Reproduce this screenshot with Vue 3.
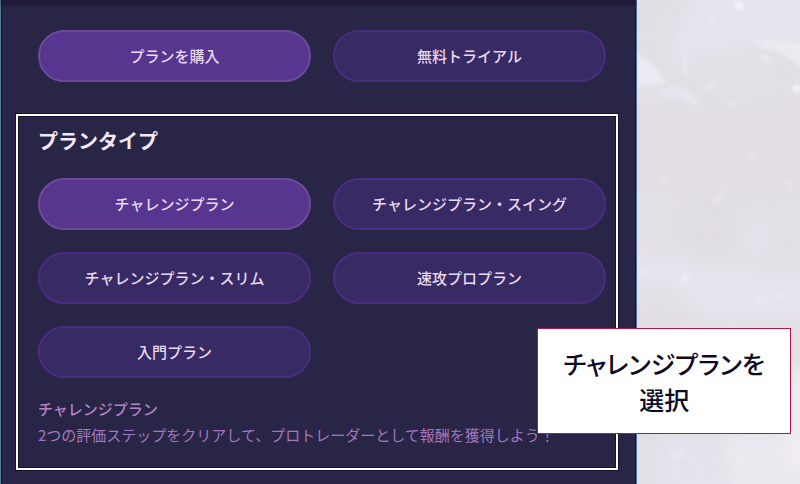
<script setup>
import { ref, computed } from 'vue'

const modes = ['プランを購入', '無料トライアル']
const plans = [
  'チャレンジプラン',
  'チャレンジプラン・スイング',
  'チャレンジプラン・スリム',
  '速攻プロプラン',
  '入門プラン',
]
const descriptions = {
  'チャレンジプラン': '2つの評価ステップをクリアして、プロトレーダーとして報酬を獲得しよう！',
}

const mode = ref(modes[0])
const plan = ref(plans[0])
const description = computed(() => descriptions[plan.value] ?? '')
</script>

<template>
  <div class="page">
    <main class="panel">
      <div class="strip"></div>
      <div class="options modes">
        <button
          v-for="m in modes"
          :key="m"
          type="button"
          class="pill"
          :class="{ active: m === mode }"
          :aria-pressed="m === mode"
          @click="mode = m"
        >{{ m }}</button>
      </div>

      <section class="frame">
        <h2 class="title">プランタイプ</h2>
        <div class="options">
          <button
            v-for="p in plans"
            :key="p"
            type="button"
            class="pill"
            :class="{ active: p === plan }"
            :aria-pressed="p === plan"
            @click="plan = p"
          >{{ p }}</button>
        </div>
        <div class="about">
          <h3 class="about-name">{{ plan }}</h3>
          <p class="about-text">{{ description }}</p>
        </div>
      </section>
    </main>

    <aside class="marble">
      <svg viewBox="0 0 163 484" preserveAspectRatio="xMidYMid slice" aria-hidden="true">
        <defs>
          <filter id="soft" x="-30%" y="-30%" width="160%" height="160%" color-interpolation-filters="sRGB">
            <feGaussianBlur stdDeviation="9" />
          </filter>
          <filter id="fine" x="-50%" y="-50%" width="200%" height="200%" color-interpolation-filters="sRGB">
            <feGaussianBlur stdDeviation="2" />
          </filter>
        </defs>
        <rect width="163" height="484" fill="#e2dfe5" />
        <g filter="url(#soft)">
          <path d="M62 -20H183V58L130 44 98 50 58 52 48 74 34 62 38 38Z" fill="#e6e4ee" />
          <path d="M-20 -20H60L34 34 30 52 -20 48Z" fill="#e0dfe4" />
          <path d="M60 60 100 52 134 62 150 90 100 104 60 92Z" fill="#e0e0e5" />
          <path d="M-20 118H183V180L90 190 -20 170Z" fill="#e1dde3" />
          <path d="M-20 250 50 262 100 268 183 282V318L126 314 92 324 60 312 40 290 -20 280Z" fill="#e7e4ee" />
          <path d="M104 226 136 218 128 262 112 256Z" fill="#e5e2ec" />
          <path d="M56 190 88 200 82 262 60 258Z" fill="#dfdce2" />
          <path d="M-20 320 60 330 50 430 -20 434Z" fill="#e1dee4" />
          <path d="M80 434H183V504H100Z" fill="#ede9f1" />
          <path d="M20 440 66 434 98 504H20Z" fill="#e4e2ec" />
          <path d="M150 370H183V470L150 460Z" fill="#f1edf3" />
        </g>
        <g filter="url(#fine)">
          <path d="M-4 50 16 65 30 82 -4 88Z" fill="#eeeaf3" />
          <path d="M116 38 167 44V70L144 52 126 48Z" fill="#eeeaf2" />
          <path d="M60 38 50 52 50 72 54 80 46 72 46 52Z" fill="#eae6ee" />
          <path d="M20 90 36 86 52 92 64 104 58 105 44 98 24 96Z" fill="#e8e5ef" />
          <path d="M124 54 136 60 132 64 122 58Z" fill="#ece8f2" />
          <path d="M20 182 32 172 28 180 22 184Z" fill="#ebe7ef" />
          <path d="M90 184 84 202 72 206 80 196Z" fill="#e8e4ec" />
          <path d="M148 176 156 188 154 192 148 182Z" fill="#e8e4ed" />
          <path d="M94 102 102 98 98 104 86 105Z" fill="#ece9f2" />
          <ellipse cx="102" cy="6" rx="5" ry="4" fill="#f5f2f7" />
          <ellipse cx="76" cy="17" rx="5" ry="5" fill="#eae7f0" />
          <ellipse cx="74" cy="86" rx="5" ry="3" fill="#eae8f2" />
          <ellipse cx="160" cy="89" rx="5" ry="4" fill="#f6f3f8" />
          <ellipse cx="115" cy="155" rx="3" ry="3" fill="#eae7ee" />
          <ellipse cx="48" cy="278" rx="4" ry="6" fill="#f1ecf2" />
          <ellipse cx="9" cy="272" rx="5" ry="5" fill="#ebe7ee" />
          <ellipse cx="124" cy="300" rx="8" ry="5" fill="#ebe7ee" />
          <ellipse cx="144" cy="296" rx="5" ry="4" fill="#ebe7ee" />
          <ellipse cx="42" cy="454" rx="8" ry="5" fill="#e9e6ef" />
        </g>
      </svg>
    </aside>

    <p class="callout">チャレンジプランを<br />選択</p>
  </div>
</template>

<style>
body {
  margin: 0;
  background: #292546;
}
</style>

<style scoped>
.page {
  position: relative;
  display: flex;
  min-height: 100vh;
  font-family: "Noto Sans CJK JP", "Noto Sans", sans-serif;
}

.panel {
  flex: 1;
  box-sizing: border-box;
  min-width: 0;
  border-left: 1px solid #55809f;
  border-right: 1px solid #4a6f9e;
  background: #292546;
  box-shadow: inset 1px 0 #1b1638, inset -1px 0 #1b1638;
}

.strip {
  height: 5px;
  background: #1e1a38;
  box-shadow: 0 1px 3px #231f3f;
}

.options {
  display: grid;
  grid-template-columns: 1fr 1fr;
  gap: 22px;
}

.modes {
  padding: 25px 30px 0 37px;
}

.pill {
  height: 52px;
  padding: 0 16px;
  border: 2px solid #4b2c80;
  border-radius: 26px;
  background: #382a64;
  color: #e9d9ee;
  font-family: inherit;
  font-size: 15px;
  font-weight: 500;
  line-height: 24px;
  cursor: pointer;
}

.pill.active {
  border-color: #6b4a9a;
  background: #583690;
}

.frame {
  margin: 32px 18px 14px 15px;
  padding: 11px 10px 20px 20px;
  border: 2px solid #fff;
  box-shadow: 0 0 0 1px #16122f, inset 0 0 0 1px #16122f;
}

.title {
  margin: 0 0 23px;
  color: #f3e9f7;
  font-size: 20px;
  font-weight: 700;
  line-height: 28px;
}

.about {
  margin-top: 18px;
  color: #b184c8;
  font-size: 15px;
  line-height: 26px;
}

.about-name {
  margin: 0;
  font-size: 15px;
  font-weight: 500;
}

.about-text {
  margin: 0;
  color: #a477bd;
  white-space: nowrap;
}

.marble {
  position: relative;
  flex: 0 0 163px;
  background: #e2dfe5;
  overflow: hidden;
}

.marble svg {
  position: absolute;
  inset: 0;
  width: 100%;
  height: 100%;
}

.callout {
  position: absolute;
  right: 9px;
  top: 328px;
  margin: 0;
  padding: 16px 25px;
  border: 1px solid #b8154a;
  background: #fff;
  color: #0d0b24;
  font-size: 25px;
  font-weight: 500;
  line-height: 36px;
  text-align: center;
  white-space: nowrap;
  font-feature-settings: "palt";
}
</style>
